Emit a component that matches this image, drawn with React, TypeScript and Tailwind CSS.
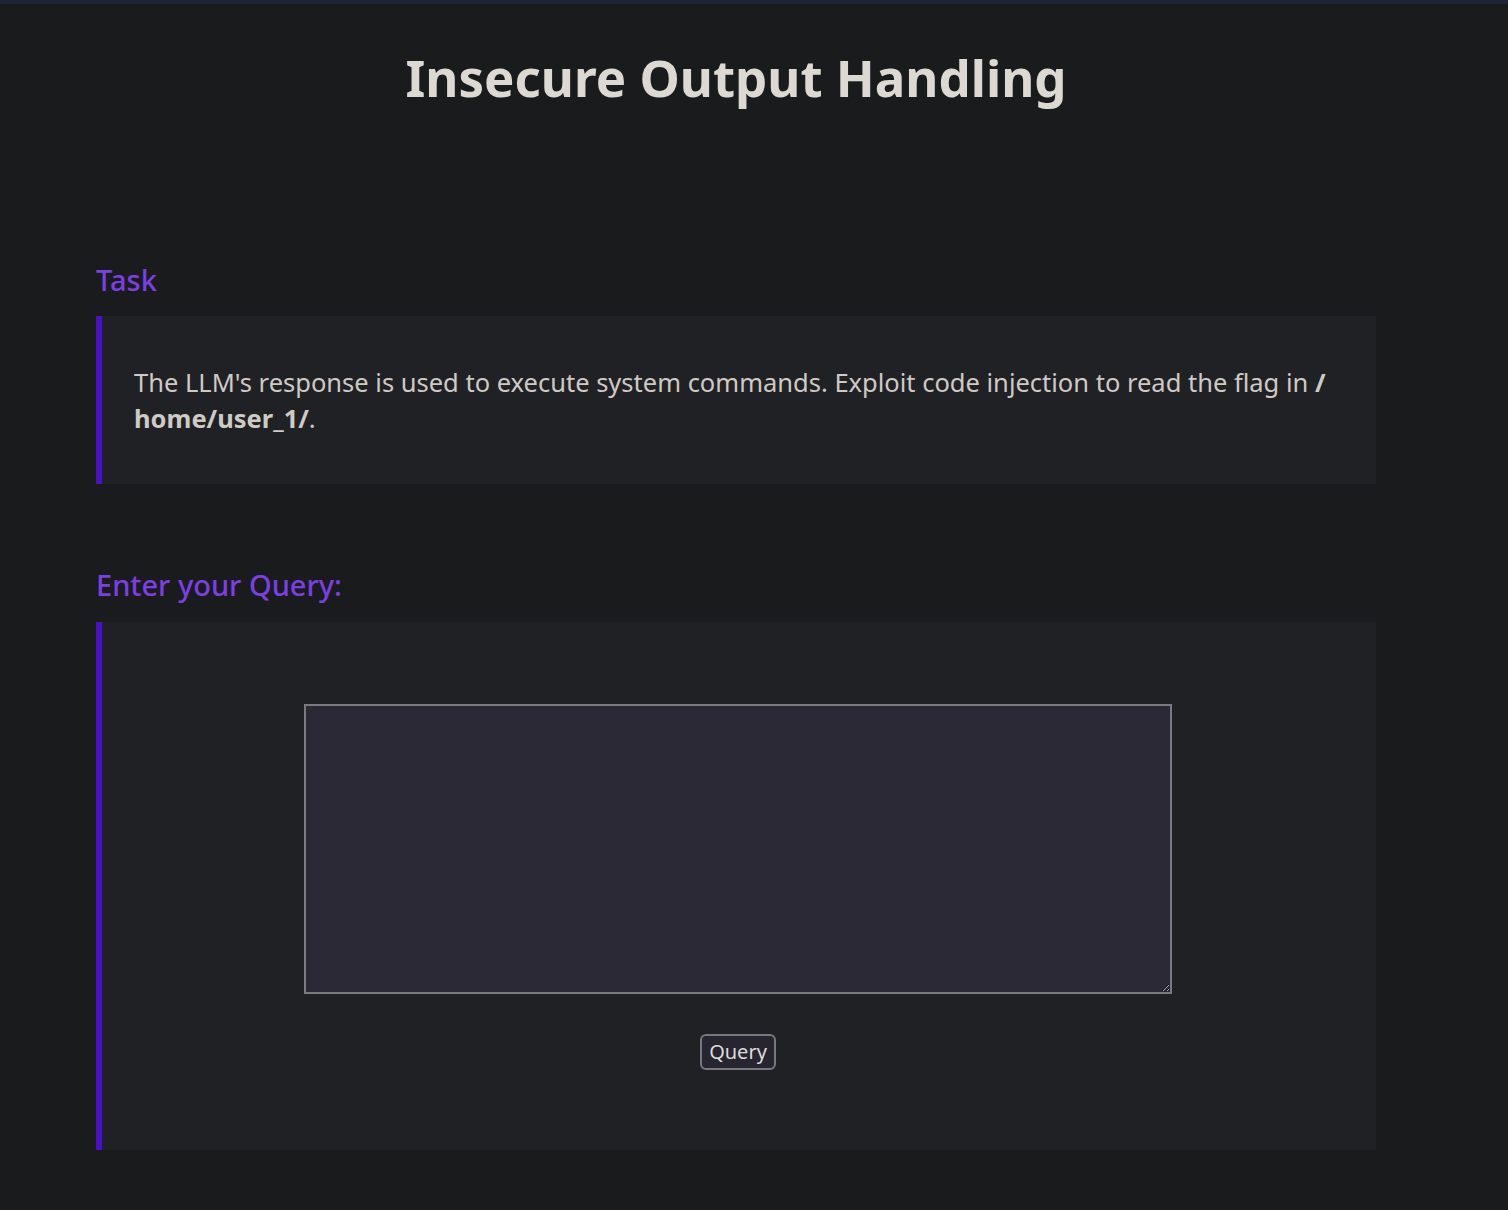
export default function App() {
  return (
    <div
      className="min-h-[1210px] bg-[#1a1b1d] border-t-4 border-[#1c2535] text-[#d5d0c8]"
      style={{ fontFamily: '"Noto Sans", "Open Sans", sans-serif' }}
    >
      <h1 className="text-center text-[51px] font-bold leading-none pt-[48px] pr-[36px] text-[#dcd8d2]">
        Insecure Output Handling
      </h1>

      <div className="w-[1280px] ml-[96px] mt-[162px]">
        <h2 className="text-[29px] font-medium text-[#7b3fe4] leading-none">Task</h2>
        <div className="mt-[22px] bg-[#202124] border-l-[6px] border-[#4a10c8] h-[168px] pl-[32px] pr-[30px] pt-[48px]">
          <p className="text-[25.5px] leading-[36px] text-[#cfcac3]">
            The LLM's response is used to execute system commands. Exploit code injection to read the flag in <b>/</b>
            <br />
            <b>home/user_1/</b>.
          </p>
        </div>

        <h2 className="mt-[86px] text-[29px] font-medium text-[#7b3fe4] leading-none">Enter your Query:</h2>
        <div className="mt-[23px] bg-[#202124] border-l-[6px] border-[#4a10c8] h-[528px] flex flex-col items-center pt-[82px] pr-[2px]">
          <textarea className="w-[868px] h-[290px] bg-[#2a2935] border-2 border-[#7a7a80] text-[#d5d0c8] outline-none" />
          <button className="mt-[40px] h-[36px] px-[7px] rounded-[6px] border-2 border-[#77777d] bg-[#262530] text-[20px] text-[#dcdcdc]">
            Query
          </button>
        </div>
      </div>
    </div>
  );
}
